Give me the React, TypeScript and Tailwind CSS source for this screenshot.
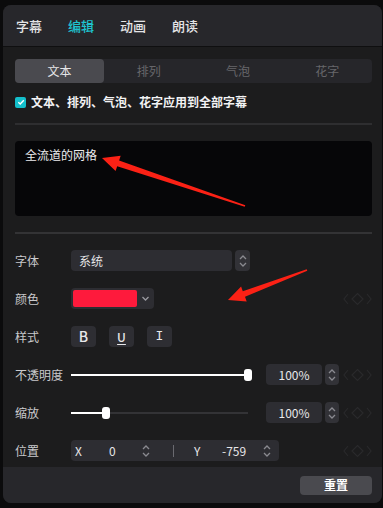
import React from "react";

const tabs = ["字幕", "编辑", "动画", "朗读"];
const segments = ["文本", "排列", "气泡", "花字"];

// red annotation arrow polygon, from tip to tail
function arrowPoints(tip: [number, number], tail: [number, number]) {
  const dx = tail[0] - tip[0];
  const dy = tail[1] - tip[1];
  const len = Math.hypot(dx, dy);
  const ux = dx / len;
  const uy = dy / len;
  const nx = -uy;
  const ny = ux;
  const bx = tip[0] + ux * 17;
  const by = tip[1] + uy * 17;
  const pts = [
    [tip[0], tip[1]],
    [bx + nx * 8, by + ny * 8],
    [bx + nx * 3, by + ny * 3],
    [tail[0] + nx * 0.8, tail[1] + ny * 0.8],
    [tail[0] - nx * 0.8, tail[1] - ny * 0.8],
    [bx - nx * 3, by - ny * 3],
    [bx - nx * 8, by - ny * 8],
  ];
  return pts.map((p) => p.map((v) => v.toFixed(1)).join(",")).join(" ");
}

const Stepper = ({ className = "" }: { className?: string }) => (
  <svg width="8" height="14" viewBox="0 0 8 14" className={className}>
    <path d="M1 5 L4 2 L7 5" fill="none" stroke="#8a8a90" strokeWidth="1.3" />
    <path d="M1 9 L4 12 L7 9" fill="none" stroke="#8a8a90" strokeWidth="1.3" />
  </svg>
);

const StepperBox = ({ w = "w-[14px]" }: { w?: string }) => (
  <div className={`${w} flex h-[21px] items-center justify-center rounded-[4px] bg-[#323237]`}>
    <Stepper />
  </div>
);

const Keyframe = () => (
  <svg width="29" height="14" viewBox="0 0 29 14" className="ml-auto">
    <path d="M5 2 L1 7 L5 12" fill="none" stroke="#29292b" strokeWidth="1.2" />
    <path d="M14.5 1.5 L20 7 L14.5 12.5 L9 7 Z" fill="none" stroke="#29292b" strokeWidth="1.2" />
    <path d="M24 2 L28 7 L24 12" fill="none" stroke="#29292b" strokeWidth="1.2" />
  </svg>
);

const Row = ({ label, children }: { label: string; children: React.ReactNode }) => (
  <div className="flex h-[21px] items-center">
    <div className="w-[56px] text-[12px] text-[#c9c9cc]">{label}</div>
    {children}
  </div>
);

const Slider = ({ pct }: { pct: number }) => (
  <div className="relative flex h-[12px] w-[177px] items-center">
    <div className="h-[2px] w-full bg-[#333336]" />
    <div className="absolute left-0 h-[2px] bg-white" style={{ width: `${pct}%` }} />
    <div
      className="absolute h-[12px] w-[8px] rounded-[3px] bg-white"
      style={{ left: `calc(${pct}% - 4px)` }}
    />
  </div>
);

const ValueBox = () => (
  <div className="ml-[18px] flex items-center gap-[3px]">
    <div className="flex h-[21px] w-[56px] items-center justify-center rounded-[4px] bg-[#2d2d32] text-[12px] text-[#e8e8ea]">
      100%
    </div>
    <StepperBox />
  </div>
);

export default function App() {
  return (
    <div className="h-[508px] w-[383px] bg-[#0b0b0c] pb-[5px] pl-[3px] pr-[1px] pt-[5px] font-['Noto_Sans_CJK_SC','Liberation_Sans',sans-serif]">
      <div className="relative flex h-full flex-col overflow-hidden rounded-[8px] bg-[#1c1c1d]">
        {/* Top tabs */}
        <div className="flex h-[42px] items-center gap-[26px] border-b border-[#0f0f10] bg-[#27272b] px-[13px] text-[13px]">
          {tabs.map((t) => (
            <span key={t} className={t === "编辑" ? "font-medium text-[#1ec3cf]" : "font-medium text-[#e4e4e6]"}>
              {t}
            </span>
          ))}
        </div>

        {/* Content */}
        <div className="flex flex-1 flex-col pl-[12px] pr-[10px]">
          <div className="mt-[12px] grid h-[24px] grid-cols-4 rounded-[4px] bg-[#26262a] text-[12px]">
            {segments.map((s, i) => (
              <div
                key={s}
                className={
                  i === 0
                    ? "flex items-center justify-center rounded-[4px] bg-[#4a4a4f] text-[#e6e6e8]"
                    : "flex items-center justify-center text-[#66666b]"
                }
              >
                {s}
              </div>
            ))}
          </div>

          <div className="mt-[11px] flex h-[16px] items-center gap-[5px] leading-[16px]">
            <div className="flex h-[11px] w-[11px] items-center justify-center rounded-[2px] bg-[#14bfcb]">
              <svg width="8" height="8" viewBox="0 0 8 8">
                <path d="M1.3 4.2 L3.2 6 L6.8 2.2" fill="none" stroke="white" strokeWidth="1.4" />
              </svg>
            </div>
            <span className="text-[12px] font-bold text-[#f2f2f3]">文本、排列、气泡、花字应用到全部字幕</span>
          </div>

          <div className="mt-[13px] h-[2px] bg-[#2e2e30]" />

          <div className="mt-[16px] h-[75px] rounded-[4px] bg-[#060608] px-[10px] pt-[5px] text-[12px] leading-[18px] text-[#ececee]">
            全流道的网格
          </div>

          <div className="mt-[16px] h-[2px] bg-[#333335]" />

          <div className="mt-[16px] flex flex-col gap-[17px]">
            <Row label="字体">
              <div className="flex h-[21px] w-[161px] items-center rounded-[4px] bg-[#2d2d32] pl-[8px] text-[12px] text-[#e6e6e8]">
                系统
              </div>
              <div className="ml-[3px]">
                <StepperBox w="w-[15px]" />
              </div>
            </Row>

            <Row label="颜色">
              <div className="flex h-[21px] w-[83px] items-center rounded-[4px] bg-[#2d2d32] pl-[2px]">
                <div className="h-[17px] w-[64px] rounded-[2px] bg-[#fe1a3c]" />
                <svg width="17" height="21" viewBox="0 0 17 21">
                  <path d="M5.5 9 L8.5 12 L11.5 9" fill="none" stroke="#9a9aa0" strokeWidth="1.3" />
                </svg>
              </div>
              <Keyframe />
            </Row>

            <Row label="样式">
              <div className="flex gap-[13px]">
                <div className="flex h-[21px] w-[25px] items-center justify-center rounded-[4px] bg-[#2e2e33] text-[14px] font-medium text-[#e8e8ea]">
                  B
                </div>
                <div className="flex h-[21px] w-[25px] items-center justify-center rounded-[4px] bg-[#2e2e33] text-[12px] font-medium text-[#e8e8ea] underline underline-offset-2">
                  U
                </div>
                <div className="flex h-[21px] w-[25px] items-center justify-center rounded-[4px] bg-[#2e2e33] font-['Liberation_Mono',monospace] text-[13px] text-[#e8e8ea]">
                  I
                </div>
              </div>
            </Row>

            <Row label="不透明度">
              <Slider pct={100} />
              <ValueBox />
              <Keyframe />
            </Row>

            <Row label="缩放">
              <Slider pct={20} />
              <ValueBox />
              <Keyframe />
            </Row>

            <Row label="位置">
              <div className="flex h-[21px] w-[208px] items-center rounded-[4px] bg-[#2d2d32] text-[12px] text-[#e6e6e8]">
                <span className="ml-[4px] w-[34px]">X</span>
                <span className="w-[33px]">0</span>
                <Stepper />
                <div className="ml-[23px] h-[12px] w-px bg-[#6a6a70]" />
                <span className="ml-[20px] w-[28px]">Y</span>
                <span className="w-[41px]">-759</span>
                <Stepper />
              </div>
              <Keyframe />
            </Row>
          </div>
        </div>

        {/* Footer */}
        <div className="flex h-[36px] items-center justify-end bg-[#27272b] pr-[10px]">
          <button className="h-[19px] w-[72px] rounded-[4px] bg-[#4a4a4f] text-[12px] font-bold text-white">
            重置
          </button>
        </div>

        {/* Annotation arrows */}
        <svg className="pointer-events-none absolute left-[-3px] top-[-5px]" width="383" height="508">
          <polygon points={arrowPoints([102, 158], [245, 206])} fill="#fb2115" />
          <polygon points={arrowPoints([228, 300], [307, 270])} fill="#fb2115" />
        </svg>
      </div>
    </div>
  );
}
